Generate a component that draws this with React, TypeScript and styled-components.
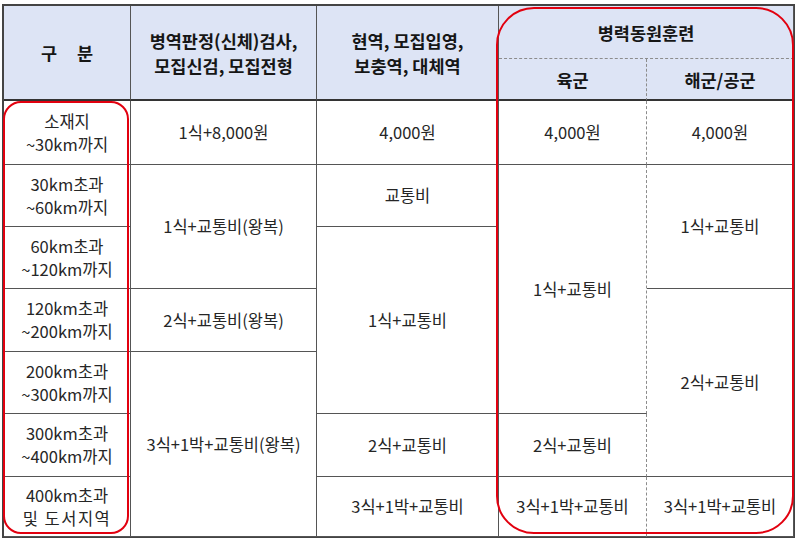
import type { ReactNode } from "react";
import styled, { createGlobalStyle } from "styled-components";

const GlobalStyle = createGlobalStyle`
  html, body {
    margin: 0;
    background: #fff;
  }
  body {
    font-family: "Noto Sans CJK KR", "Noto Sans", sans-serif;
  }
`;

const Page = styled.div`
  position: relative;
  width: 800px;
  height: 545px;
  padding: 4px 0 0 2px;
  box-sizing: border-box;
`;

const Table = styled.div`
  display: grid;
  grid-template-columns: 127px 186px 182px 148px 147px;
  grid-template-rows: 53px 42px 64px 62px 62px 63px 62px 63px 60px;
  width: max-content;
  border-top: 2px solid #444;
  border-left: 2px solid #444;
  border-right: 1px solid #444;
  border-bottom: 1px solid #444;
`;

type CellProps = {
  $c: number;
  $r: number;
  $cs?: number;
  $rs?: number;
  $head?: boolean;
  $dashR?: boolean;
  $dashB?: boolean;
  $heavyB?: boolean;
};

const Cell = styled.div<CellProps>`
  grid-column: ${(p) => p.$c} / span ${(p) => p.$cs ?? 1};
  grid-row: ${(p) => p.$r} / span ${(p) => p.$rs ?? 1};
  display: flex;
  align-items: center;
  justify-content: center;
  text-align: center;
  box-sizing: border-box;
  white-space: pre-wrap;
  border-right: ${(p) => (p.$dashR ? "1px dashed #8c8c8c" : "1px solid #555")};
  border-bottom: ${(p) =>
    p.$heavyB ? "2px solid #333" : p.$dashB ? "1px dashed #8c8c8c" : "1px solid #555"};
  background: ${(p) => (p.$head ? "#dde4f5" : "#fff")};
  color: ${(p) => (p.$head ? "#161616" : "#262626")};
  font-size: ${(p) => (p.$head ? "17.5px" : "16.5px")};
  font-weight: ${(p) => (p.$head ? 700 : 400)};
  line-height: ${(p) => (p.$head ? "25px" : "23px")};
`;

const Spaced = styled.span`
  word-spacing: 16px;
`;

const Tracked = styled.span`
  letter-spacing: 1.5px;
`;

const Highlight = styled.div<{ $x: number; $y: number; $w: number; $h: number; $radius: number }>`
  position: absolute;
  left: ${(p) => p.$x}px;
  top: ${(p) => p.$y}px;
  width: ${(p) => p.$w}px;
  height: ${(p) => p.$h}px;
  border: 2.5px solid #e2000f;
  border-radius: ${(p) => p.$radius}px;
  box-sizing: border-box;
  pointer-events: none;
`;

type Item = { c: number; r: number; rs?: number; text: ReactNode; dashR?: boolean };

// body rows start at grid row 3
const body: Item[] = [
  { c: 1, r: 3, text: "소재지\n~30km까지" },
  { c: 1, r: 4, text: "30km초과\n~60km까지" },
  { c: 1, r: 5, text: "60km초과\n~120km까지" },
  { c: 1, r: 6, text: "120km초과\n~200km까지" },
  { c: 1, r: 7, text: "200km초과\n~300km까지" },
  { c: 1, r: 8, text: "300km초과\n~400km까지" },
  {
    c: 1,
    r: 9,
    text: (
      <>
        {"400km초과\n"}
        <Tracked>및 도서지역</Tracked>
      </>
    ),
  },

  { c: 2, r: 3, text: "1식+8,000원" },
  { c: 2, r: 4, rs: 2, text: "1식+교통비(왕복)" },
  { c: 2, r: 6, text: "2식+교통비(왕복)" },
  { c: 2, r: 7, rs: 3, text: "3식+1박+교통비(왕복)" },

  { c: 3, r: 3, text: "4,000원" },
  { c: 3, r: 4, text: "교통비" },
  { c: 3, r: 5, rs: 3, text: "1식+교통비" },
  { c: 3, r: 8, text: "2식+교통비" },
  { c: 3, r: 9, text: "3식+1박+교통비" },

  { c: 4, r: 3, text: "4,000원", dashR: true },
  { c: 4, r: 4, rs: 4, text: "1식+교통비", dashR: true },
  { c: 4, r: 8, text: "2식+교통비", dashR: true },
  { c: 4, r: 9, text: "3식+1박+교통비", dashR: true },

  { c: 5, r: 3, text: "4,000원" },
  { c: 5, r: 4, rs: 2, text: "1식+교통비" },
  { c: 5, r: 6, rs: 3, text: "2식+교통비" },
  { c: 5, r: 9, text: "3식+1박+교통비" },
];

export default function App() {
  return (
    <Page>
      <GlobalStyle />
      <Table>
        <Cell $c={1} $r={1} $rs={2} $head $heavyB>
          <Spaced>구 분</Spaced>
        </Cell>
        <Cell $c={2} $r={1} $rs={2} $head $heavyB>
          {"병역판정(신체)검사,\n모집신검, 모집전형"}
        </Cell>
        <Cell $c={3} $r={1} $rs={2} $head $heavyB>
          {"현역, 모집입영,\n보충역, 대체역"}
        </Cell>
        <Cell $c={4} $cs={2} $r={1} $head $dashB>
          병력동원훈련
        </Cell>
        <Cell $c={4} $r={2} $head $heavyB $dashR>
          육군
        </Cell>
        <Cell $c={5} $r={2} $head $heavyB>
          해군/공군
        </Cell>

        {body.map((it) => (
          <Cell key={`${it.c}-${it.r}`} $c={it.c} $r={it.r} $rs={it.rs} $dashR={it.dashR}>
            <div>{it.text}</div>
          </Cell>
        ))}
      </Table>

      <Highlight $x={3} $y={101} $w={126} $h={433} $radius={18} />
      <Highlight $x={496} $y={7} $w={298} $h={527} $radius={38} />
    </Page>
  );
}
